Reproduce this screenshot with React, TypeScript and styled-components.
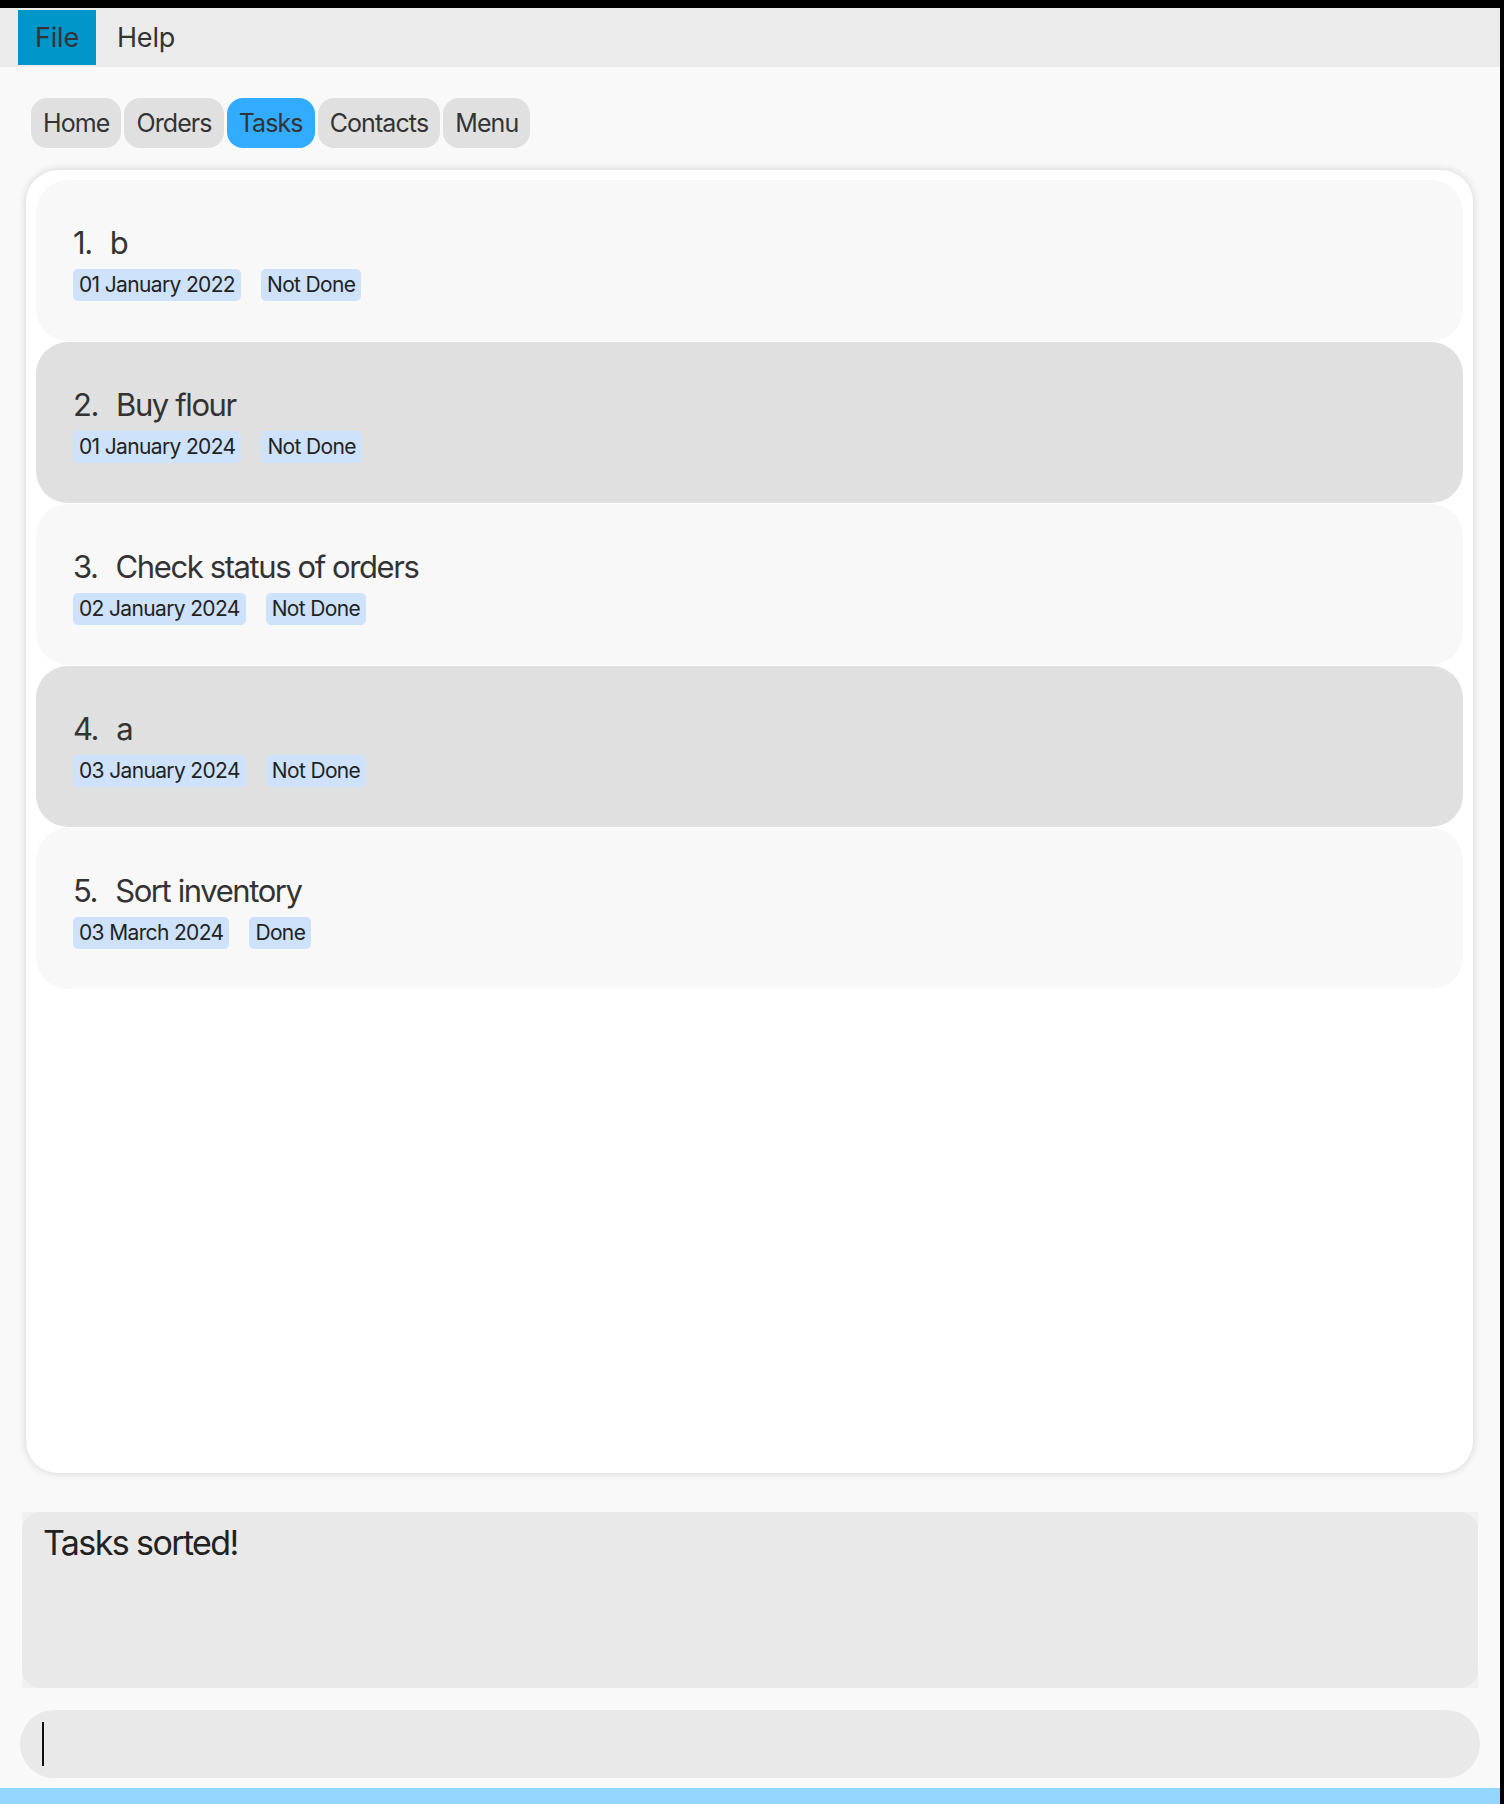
import React from "react";
import styled, { createGlobalStyle } from "styled-components";

const Global = createGlobalStyle`
  html, body {
    margin: 0;
    padding: 0;
    background: #000;
  }
  body {
    font-family: Inter, "Noto Sans", "Liberation Sans", sans-serif;
  }
`;

const Window = styled.div`
  margin-top: 8px;
  width: 1500px;
  height: 1796px;
  background: #f9f9f9;
  display: flex;
  flex-direction: column;
  box-sizing: border-box;
`;

const MenuBar = styled.div`
  height: 59px;
  background: #ebebeb;
  display: flex;
  align-items: center;
  padding-left: 18px;
  gap: 4px;
`;

const MenuItem = styled.div<{ $active?: boolean }>`
  height: 55px;
  display: flex;
  align-items: center;
  padding: 0 17px;
  font-size: 27px;
  letter-spacing: -0.2px;
  color: #333;
  background: ${(p) => (p.$active ? "#0096c9" : "transparent")};
`;

const TabRow = styled.div`
  margin-top: 31px;
  height: 50px;
  padding-left: 31px;
  display: flex;
  gap: 3px;
`;

const Tab = styled.div<{ $active?: boolean }>`
  height: 50px;
  padding: 0 12px;
  border-radius: 16px;
  display: flex;
  align-items: center;
  font-size: 25px;
  letter-spacing: -0.9px;
  color: #333;
  background: ${(p) => (p.$active ? "#31acff" : "#e0e0e0")};
`;

const Panel = styled.div`
  margin-top: 22px;
  margin-left: 26px;
  width: 1447px;
  height: 1303px;
  background: #fff;
  border-radius: 32px;
  box-shadow: 0 0 9px rgba(0, 0, 0, 0.16);
  padding: 10px;
  box-sizing: border-box;
  display: flex;
  flex-direction: column;
  gap: 1px;
`;

const Card = styled.div<{ $alt?: boolean }>`
  height: 161px;
  box-sizing: border-box;
  border-radius: 32px;
  background: ${(p) => (p.$alt ? "#e0e0e0" : "#f8f8f8")};
  padding: 44px 37px 0 37px;
  display: flex;
  flex-direction: column;
`;

const Title = styled.div`
  display: flex;
  font-size: 31px;
  line-height: 37px;
  letter-spacing: -1.4px;
  color: #333;
  white-space: pre;
`;

const Index = styled.span`
  margin-right: 18px;
`;

const TagRow = styled.div`
  margin-top: 8px;
  display: flex;
  gap: 20px;
`;

const Tag = styled.div`
  height: 32px;
  line-height: 32px;
  padding: 0 6px;
  border-radius: 5px;
  background: #cfe2fc;
  color: #222;
  font-size: 21px;
  letter-spacing: -0.65px;
`;

const StatusOuter = styled.div`
  margin-top: 39px;
  margin-left: 22px;
  width: 1456px;
  height: 176px;
  background: #f1f1f1;
`;

const StatusBox = styled.div`
  height: 100%;
  box-sizing: border-box;
  background: #e9e9e9;
  border-radius: 18px;
  padding: 10px 21px;
  font-size: 34px;
  letter-spacing: -1.6px;
  color: #222;
`;

const CommandBox = styled.div`
  margin-top: 22px;
  margin-left: 20px;
  width: 1460px;
  height: 68px;
  border-radius: 34px;
  background: #e9e9e9;
  display: flex;
  align-items: center;
  padding-left: 22px;
  box-sizing: border-box;
`;

const Caret = styled.span`
  display: block;
  width: 2px;
  height: 44px;
  background: #111;
`;

const BottomBar = styled.div`
  margin-top: auto;
  height: 16px;
  background: #94d6fd;
`;

const tasks = [
  { n: 1, name: "b", date: "01 January 2022", status: "Not Done" },
  { n: 2, name: "Buy flour", date: "01 January 2024", status: "Not Done" },
  { n: 3, name: "Check status of orders", date: "02 January 2024", status: "Not Done" },
  { n: 4, name: "a", date: "03 January 2024", status: "Not Done" },
  { n: 5, name: "Sort inventory", date: "03 March 2024", status: "Done" },
];

const tabs = ["Home", "Orders", "Tasks", "Contacts", "Menu"];

export default function App() {
  return (
    <>
      <Global />
      <Window>
        <MenuBar>
          <MenuItem $active>File</MenuItem>
          <MenuItem>Help</MenuItem>
        </MenuBar>
        <TabRow>
          {tabs.map((t) => (
            <Tab key={t} $active={t === "Tasks"}>
              {t}
            </Tab>
          ))}
        </TabRow>
        <Panel>
          {tasks.map((t, i) => (
            <Card key={t.n} $alt={i % 2 === 1}>
              <Title>
                <Index>{`${t.n}.`}</Index>
                <span>{t.name}</span>
              </Title>
              <TagRow>
                <Tag>{t.date}</Tag>
                <Tag>{t.status}</Tag>
              </TagRow>
            </Card>
          ))}
        </Panel>
        <StatusOuter>
          <StatusBox>Tasks sorted!</StatusBox>
        </StatusOuter>
        <CommandBox>
          <Caret />
        </CommandBox>
        <BottomBar />
      </Window>
    </>
  );
}
